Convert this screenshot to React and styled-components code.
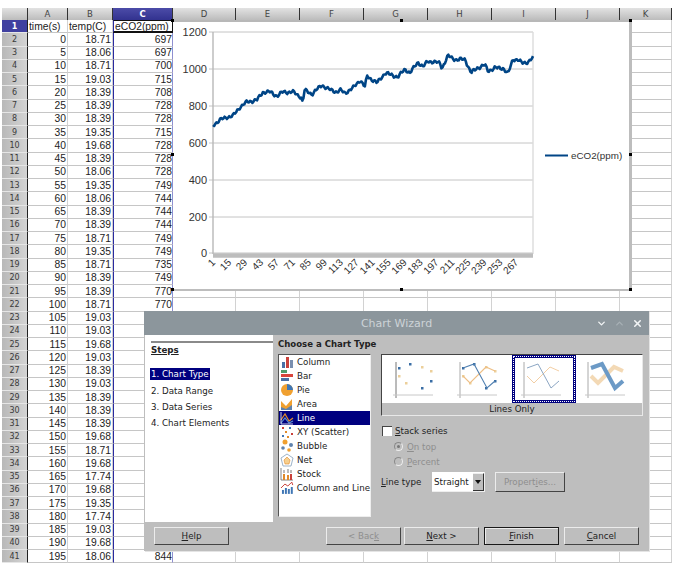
import React from "react";
import styled, { createGlobalStyle } from "styled-components";
import { ChevronDown, ChevronUp, X } from "lucide-react";

const GlobalStyle = createGlobalStyle`
  html, body {
    margin: 0;
    background: #fff;
  }
`;

const temps = [
  18.71, 18.06, 18.71, 19.03, 18.39, 18.39, 18.39, 19.35, 19.68, 18.39, 18.06, 19.35, 18.06, 18.39,
  18.39, 18.71, 19.35, 18.71, 18.39, 18.39, 18.71, 19.03, 19.03, 19.68, 19.03, 18.39, 19.03, 18.39,
  18.39, 18.39, 19.68, 18.71, 19.68, 17.74, 19.68, 19.35, 17.74, 19.03, 19.68, 18.06,
];
const eco2 = [
  697, 697, 700, 715, 708, 728, 728, 715, 728, 728, 728, 749, 744, 744, 744, 749, 749, 735, 749, 770, 770,
];
const colNames = ["A", "B", "C", "D", "E", "F", "G", "H", "I", "J", "K"];

const Page = styled.div`
  position: relative;
  width: 679px;
  height: 573px;
  overflow: hidden;
  background: #fff;
`;

const Sheet = styled.div`
  display: grid;
  grid-template-columns: 26px 40px 45px 60px 63px 64px 64px 64px 64px 64px 64px 52px;
  grid-template-rows: 12px;
  grid-auto-rows: 13.25px;
  width: 670px;
  padding: 8px 0 0 2px;
  font-family: "Liberation Sans", Arial, sans-serif;
  font-size: 10.3px;
  color: #222;
`;

const ColHead = styled.div`
  display: flex;
  align-items: center;
  justify-content: center;
  border-right: 1px solid #333;
  box-sizing: border-box;
  background: ${(p) => (p.$active ? "linear-gradient(#4c4ca8, #32328f)" : "linear-gradient(#e2e2e2, #bcbcbc)")};
  color: ${(p) => (p.$active ? "#fff" : "#444")};
  font-family: "DejaVu Sans", sans-serif;
  font-size: 8.5px;
  font-weight: ${(p) => (p.$active ? 700 : 400)};
`;

const RowHead = styled.div`
  display: flex;
  align-items: center;
  justify-content: center;
  box-sizing: border-box;
  border-right: 1px solid #222;
  border-bottom: 1px solid #e6e6e6;
  background: ${(p) => (p.$active ? "#4040a0" : "linear-gradient(90deg, #b8b8b8, #d4d4d4)")};
  color: ${(p) => (p.$active ? "#fff" : "#3a3a3a")};
  font-family: "DejaVu Sans", sans-serif;
  font-size: 8px;
  font-weight: ${(p) => (p.$active ? 700 : 400)};
`;

const Cell = styled.div`
  display: flex;
  align-items: center;
  justify-content: ${(p) => (p.$text ? "flex-start" : "flex-end")};
  box-sizing: border-box;
  padding: 0 ${(p) => (p.$sel ? 0 : 1)}px 0 ${(p) => (p.$text ? 1 : 0)}px;
  border-bottom: 1px solid #c6c6c6;
  border-right: 1px solid #d2d2d2;
  ${(p) => p.$sel && "border-left: 1px solid #2a2aa0; border-right: 1px solid #8f8fd0;"}
  white-space: nowrap;
  overflow: hidden;
`;

const CursorCell = styled(Cell)`
  border-top: 1px solid #111;
  border-bottom: 2px solid #111;
  border-right: 1px solid #111;
`;

const Handle = styled.div`
  position: absolute;
  left: ${(p) => p.$x - 2}px;
  top: ${(p) => p.$y - 2}px;
  width: 3px;
  height: 3px;
  background: #000;
`;

const ChartFrame = styled.div`
  position: absolute;
  left: 173px;
  top: 20px;
  width: 459px;
  height: 271px;
  box-sizing: border-box;
  background: #fff;
  border-top: 2px solid #b8b8b8;
  border-right: 3px solid #bdbdbd;
  border-bottom: 2px solid #bdbdbd;
`;

const ChartSvg = styled.svg`
  display: block;
  font-family: "Liberation Sans", Arial, sans-serif;
  font-size: 11px;
  fill: #333;
`;

const waypoints = [
  [213, 125], [220, 120], [227, 117], [233, 116], [240, 107], [247, 102], [257, 100], [263, 92], [270, 92],
  [277, 96], [283, 92], [293, 92], [301, 97], [303, 104], [304, 90], [312, 94], [322, 85], [328, 89], [337, 92],
  [340, 90], [345, 93], [353, 88], [360, 80], [365, 87], [367, 76], [377, 83], [385, 73], [398, 77], [405, 69],
  [410, 73], [418, 62], [423, 67], [428, 61], [440, 63], [442, 68], [448, 56], [457, 60], [465, 59], [471, 73],
  [477, 68], [485, 65], [488, 71], [495, 68], [503, 68], [508, 74], [513, 59], [518, 60], [522, 63], [528, 62],
  [533, 58],
];

const buildLine = () => {
  const pts = [];
  let seg = 0;
  for (let i = 0; i <= 276; i++) {
    const x = 213 + (i * 320) / 276;
    while (seg < waypoints.length - 2 && waypoints[seg + 1][0] < x) seg++;
    const [x0, y0] = waypoints[seg];
    const [x1, y1] = waypoints[seg + 1];
    const y = y0 + ((y1 - y0) * (x - x0)) / (x1 - x0);
    const noise = Math.sin(i * 1.7) * 1.2 + Math.sin(i * 0.61) * 0.9;
    pts.push(`${x.toFixed(1)},${(y + noise).toFixed(1)}`);
  }
  return pts.join(" ");
};

const yLabels = [
  [1200, 32], [1000, 69], [800, 106], [600, 143], [400, 180], [200, 217], [0, 253],
];

const ChartDrawing = () => (
  <ChartSvg width="456" height="267" viewBox="173 22 456 267">
    {yLabels.map(([v, y]) => (
      <g key={v}>
        <line x1="209" x2="533" y1={y} y2={y} stroke="#c4c4c4" strokeWidth="1" />
        <text x="207" y={y + 4} textAnchor="end">{v}</text>
      </g>
    ))}
    <line x1="213" x2="213" y1="32" y2="254" stroke="#b8b8b8" strokeWidth="1.4" />
    <line x1="533" x2="533" y1="32" y2="254" stroke="#dcdcdc" strokeWidth="1.4" />
    <line x1="213" x2="533" y1="255.5" y2="255.5" stroke="#bdbdbd" strokeWidth="4.5" />
    <polyline points={buildLine()} fill="none" stroke="#004586" strokeWidth="2.6" strokeLinejoin="round" />
    {Array.from({ length: 20 }, (_, i) => (
      <text
        key={i}
        x={216 + i * 15.95}
        y={263}
        textAnchor="end"
        fontSize="10"
        transform={`rotate(-45 ${216 + i * 15.95} 263)`}
      >
        {1 + i * 14}
      </text>
    ))}
    <line x1="545" x2="568" y1="155.5" y2="155.5" stroke="#004586" strokeWidth="2" />
    <text x="571" y="159" fontSize="9.8">eCO2(ppm)</text>
  </ChartSvg>
);

const Dialog = styled.div`
  position: absolute;
  left: 144px;
  top: 311px;
  width: 505px;
  height: 240px;
  display: flex;
  flex-direction: column;
  background: #bebebe;
  font-family: "DejaVu Sans", sans-serif;
  font-size: 8.7px;
  color: #222;
  box-shadow: 1px 1px 0 #e4e4e4;
`;

const TitleBar = styled.div`
  display: grid;
  grid-template-columns: 1fr auto 1fr;
  align-items: center;
  height: 24px;
  flex: none;
  background: #8c969c;
  color: #ccd3d7;
  font-size: 11px;
`;

const WindowButtons = styled.div`
  grid-column: 3;
  display: flex;
  justify-content: flex-end;
  align-items: center;
  gap: 7px;
  padding-right: 6px;
`;

const WindowButton = styled.span`
  display: flex;
  color: ${(p) => (p.$dim ? "#a7b0b5" : "#f2f4f5")};
`;

const DialogBody = styled.div`
  display: flex;
  height: 187px;
  flex: none;
`;

const StepsPanel = styled.div`
  width: 128px;
  margin-left: 1px;
  background: #fff;
  padding: 6px 0 0 6px;
  box-sizing: border-box;
`;

const StepsTitle = styled.div`
  border-top: 2px solid #8a8a8a;
  padding-top: 2px;
  height: 21px;
  font-weight: 700;
  text-decoration: underline;
`;

const StepItem = styled.div`
  height: 16.4px;
  display: flex;
  align-items: center;
  span {
    padding: 1px 1px;
    margin-left: -1px;
    background: ${(p) => (p.$active ? "#00007f" : "transparent")};
    color: ${(p) => (p.$active ? "#fff" : "#222")};
  }
`;

const TypeColumn = styled.div`
  width: 93px;
  margin-left: 5px;
  flex: none;
`;

const SectionTitle = styled.div`
  height: 19px;
  line-height: 18px;
  font-size: 8.55px;
  font-weight: 700;
  white-space: nowrap;
`;

const TypeList = styled.div`
  height: 163px;
  box-sizing: border-box;
  background: #fff;
  border-top: 1px solid #555;
  border-left: 1px solid #555;
  border-right: 1px solid #eee;
  border-bottom: 1px solid #eee;
`;

const TypeRow = styled.div`
  display: flex;
  align-items: center;
  gap: 3px;
  height: 14px;
  padding-left: 1px;
  white-space: nowrap;
  background: ${(p) => (p.$active ? "#00007f" : "transparent")};
  color: ${(p) => (p.$active ? "#fff" : "#222")};
`;

const OptionsColumn = styled.div`
  width: 262px;
  margin-left: 10px;
  padding-top: 19px;
  flex: none;
`;

const Strip = styled.div`
  border-top: 1px solid #444;
  border-left: 1px solid #444;
  border-right: 1px solid #e8e8e8;
  border-bottom: 1px solid #e8e8e8;
  background: #bebebe;
`;

const ThumbRow = styled.div`
  display: flex;
  padding-left: 2px;
  background: #fff;
`;

const Thumb = styled.div`
  width: 64px;
  height: 48px;
  box-sizing: border-box;
  ${(p) =>
    p.$selected &&
    `box-shadow: inset 0 0 0 3px #00007f;
     outline: 1px dotted #fff;
     outline-offset: -2px;`}
`;

const StripLabel = styled.div`
  height: 12px;
  line-height: 12px;
  text-align: center;
`;

const CheckRow = styled.div`
  display: flex;
  align-items: center;
  gap: 3px;
  height: 10px;
  margin: 10px 0 0 1px;
`;

const CheckBox = styled.span`
  width: 9px;
  height: 9px;
  background: #fff;
  border-top: 1px solid #444;
  border-left: 1px solid #444;
`;

const RadioRow = styled.div`
  display: flex;
  align-items: center;
  gap: 4px;
  height: 15px;
  margin-left: 13px;
  color: #8e8e8e;
`;

const RadioRows = styled.div`
  margin-top: 3px;
`;

const Radio = styled.span`
  position: relative;
  width: 7px;
  height: 7px;
  border-radius: 50%;
  border: 1px solid #8a8a8a;
  border-right-color: #eee;
  border-bottom-color: #eee;
  &::after {
    content: "";
    display: ${(p) => (p.$on ? "block" : "none")};
    position: absolute;
    inset: 2px;
    border-radius: 50%;
    background: #777;
  }
`;

const LineTypeRow = styled.div`
  display: flex;
  align-items: center;
  height: 20px;
  margin-top: 3px;
`;

const LineTypeLabel = styled.span`
  width: 51px;
`;

const Combo = styled.div`
  display: flex;
  width: 53px;
  height: 20px;
  box-sizing: border-box;
  background: #fff;
  border-right: 1px solid #eee;
  border-bottom: 1px solid #eee;
  padding-left: 2px;
  align-items: center;
  justify-content: space-between;
`;

const ComboArrow = styled.span`
  width: 11px;
  height: 18px;
  box-sizing: border-box;
  background: #bebebe;
  border-right: 1px solid #333;
  border-bottom: 1px solid #333;
  border-top: 1px solid #eee;
  display: flex;
  align-items: center;
  justify-content: center;
  &::after {
    content: "";
    border-left: 3px solid transparent;
    border-right: 3px solid transparent;
    border-top: 4px solid #111;
  }
`;

const Button = styled.div`
  display: flex;
  align-items: center;
  justify-content: center;
  box-sizing: border-box;
  width: ${(p) => p.$w || 75}px;
  height: ${(p) => p.$h || 18}px;
  margin-left: ${(p) => p.$ml || 0}px;
  border: 1px solid;
  border-color: #ececec #444 #444 #ececec;
  color: ${(p) => (p.$disabled ? "#8e8e8e" : "#222")};
  ${(p) => p.$default && "border: 1px solid #1a1a1a; box-shadow: inset 1px 1px 0 #ececec;"}
`;

const Footer = styled.div`
  display: flex;
  align-items: flex-start;
  padding: 5px 0 0 10px;
`;

const FooterSpacer = styled.div`
  flex: 1;
`;

const FooterRight = styled.div`
  display: flex;
  padding-right: 10px;
`;

const ListIcon = ({ kind, active }) => {
  const axis = active ? "#fff" : "#444";
  const art = {
    column: (
      <>
        <rect x="2" y="7" width="3" height="6" fill="#4a6fa5" />
        <rect x="6" y="2" width="3" height="11" fill="#c9403a" />
        <rect x="10" y="5" width="3" height="8" fill="#7a8fb0" />
      </>
    ),
    bar: (
      <>
        <rect x="1" y="1" width="6" height="3" fill="#4f9a6a" />
        <rect x="1" y="5" width="12" height="3" fill="#d8443c" />
        <rect x="1" y="9" width="8" height="3" fill="#4a6fa5" />
      </>
    ),
    pie: (
      <>
        <circle cx="7" cy="7" r="6" fill="#f0a030" />
        <path d="M7 7V1A6 6 0 0 1 13 7Z" fill="#3f76b5" />
      </>
    ),
    area: (
      <>
        <path d="M1 4L6 9L12 2V13H1Z" fill="#f0a030" />
        <path d="M1 10L6 12L12 8V13H1Z" fill="#5f82ad" />
      </>
    ),
    line: (
      <>
        <path d="M1 9L5 3L9 10L13 7" fill="none" stroke="#e08a2a" strokeWidth="1.2" />
        <path d="M1 12L5 7L9 12L13 10" fill="none" stroke="#5a8fd0" strokeWidth="1.2" />
        <path d="M1 1V13H13" fill="none" stroke={axis} strokeWidth="0.8" />
      </>
    ),
    xy: (
      <>
        <rect x="2" y="2" width="2" height="2" fill="#c9403a" />
        <rect x="9" y="2" width="2" height="2" fill="#3f76b5" />
        <rect x="5" y="6" width="2" height="2" fill="#e08a2a" />
        <rect x="11" y="8" width="2" height="2" fill="#c9403a" />
        <rect x="2" y="10" width="2" height="2" fill="#3f76b5" />
        <rect x="7" y="11" width="2" height="2" fill="#e08a2a" />
      </>
    ),
    bubble: (
      <>
        <circle cx="5" cy="3" r="2.5" fill="#f0a030" />
        <circle cx="11" cy="6" r="2" fill="#5f82ad" />
        <circle cx="3" cy="9" r="1.8" fill="#5f82ad" />
        <circle cx="9" cy="11" r="1.8" fill="#f0a030" />
      </>
    ),
    net: (
      <>
        <path d="M7 1L13 5L11 13H3L1 5Z" fill="none" stroke="#9db3c9" />
        <path d="M7 4L10 7L9 11H5L4 7Z" fill="#f6cf8e" stroke="#e08a2a" strokeWidth="0.6" />
      </>
    ),
    stock: (
      <>
        <path d="M1 1V13H13" fill="none" stroke="#666" strokeWidth="0.8" />
        <rect x="3" y="7" width="2" height="6" fill="#e08a2a" />
        <rect x="7" y="8" width="2" height="5" fill="#e08a2a" />
        <rect x="10" y="7" width="2" height="6" fill="#c9403a" />
        <path d="M4 3V6M8 2V6M11 3V6" stroke="#555" strokeWidth="0.8" />
      </>
    ),
    combo: (
      <>
        <rect x="2" y="9" width="2" height="4" fill="#3f76b5" />
        <rect x="5" y="7" width="2" height="6" fill="#3f76b5" />
        <rect x="8" y="8" width="2" height="5" fill="#3f76b5" />
        <rect x="11" y="6" width="2" height="7" fill="#3f76b5" />
        <path d="M1 7L5 3L8 5L12 1L13 4" fill="none" stroke="#c9403a" strokeWidth="1" />
      </>
    ),
  };
  return (
    <svg width="14" height="14" viewBox="0 0 14 14">
      {art[kind]}
    </svg>
  );
};

const chartTypes = [
  ["column", "Column"],
  ["bar", "Bar"],
  ["pie", "Pie"],
  ["area", "Area"],
  ["line", "Line"],
  ["xy", "XY (Scatter)"],
  ["bubble", "Bubble"],
  ["net", "Net"],
  ["stock", "Stock"],
  ["combo", "Column and Line"],
];

const blueLine = "18,13 29,9 42,33 50,26";
const orangeLine = "18,21 25,28 41,12 50,16";

const ThumbArt = ({ kind }) => (
  <svg width="64" height="48" viewBox="3 0 64 48">
    <line x1="15" x2="15" y1="7" y2="43" stroke={kind === "dots" ? "#777" : "#aaa"} />
    <line x1="12" x2="52" y1="40" y2="40" stroke="#c8c8c8" />
    {kind === "band" && (
      <>
        <polyline points={orangeLine} fill="none" stroke="#f3d9b5" strokeWidth="4" />
        <polyline points={blueLine} fill="none" stroke="#6c9ac6" strokeWidth="4" />
      </>
    )}
    {(kind === "dots" || kind === "both") &&
      [[18, 13], [29, 9], [41, 33], [50, 26]].map(([x, y]) => (
        <rect key={x} x={x - 1} y={y - 1} width="2.5" height="2.5" fill="#3a6ea5" />
      ))}
    {(kind === "dots" || kind === "both") &&
      [[18, 21], [25, 28], [41, 12], [50, 16]].map(([x, y]) => (
        <rect key={x} x={x - 1} y={y - 1} width="2.5" height="2.5" fill="#eccf9a" />
      ))}
    {kind === "both" && (
      <>
        <polyline points={orangeLine} fill="none" stroke="#eebf85" strokeWidth="1.1" />
        <polyline points={blueLine} fill="none" stroke="#4f7fb0" strokeWidth="1.1" />
      </>
    )}
    {kind === "lines" && (
      <>
        <polyline points={orangeLine} fill="none" stroke="#f0c89a" strokeWidth="0.9" />
        <polyline points={blueLine} fill="none" stroke="#7f9cbc" strokeWidth="0.9" />
      </>
    )}
  </svg>
);

const App = () => {
  const rows = [];
  for (let r = 2; r <= 41; r++) {
    const i = r - 2;
    const co2 = r === 41 ? 844 : eco2[i];
    rows.push(
      <React.Fragment key={r}>
        <RowHead>{r}</RowHead>
        <Cell>{i * 5}</Cell>
        <Cell>{temps[i].toFixed(2)}</Cell>
        <Cell $sel>{co2}</Cell>
        {colNames.slice(3).map((c) => (
          <Cell key={c} />
        ))}
      </React.Fragment>,
    );
  }

  return (
    <Page>
      <GlobalStyle />
      <Sheet>
        <ColHead />
        {colNames.map((c) => (
          <ColHead key={c} $active={c === "C"}>
            {c}
          </ColHead>
        ))}
        <RowHead $active>1</RowHead>
        <Cell $text>time(s)</Cell>
        <Cell $text>temp(C)</Cell>
        <CursorCell $sel $text>eCO2(ppm)</CursorCell>
        {colNames.slice(3).map((c) => (
          <Cell key={c} />
        ))}
        {rows}
      </Sheet>

      <ChartFrame>
        <ChartDrawing />
      </ChartFrame>
      <Handle $x={173} $y={21} />
      <Handle $x={402} $y={21} />
      <Handle $x={631} $y={21} />
      <Handle $x={173} $y={155} />
      <Handle $x={631} $y={155} />
      <Handle $x={631} $y={290} />
      <Handle $x={402} $y={290} />
      <Handle $x={173} $y={290} />

      <Dialog>
        <TitleBar>
          <span />
          <span>Chart Wizard</span>
          <WindowButtons>
            <WindowButton><ChevronDown size={11} strokeWidth={3} /></WindowButton>
            <WindowButton $dim><ChevronUp size={11} strokeWidth={3} /></WindowButton>
            <WindowButton><X size={11} strokeWidth={3.4} /></WindowButton>
          </WindowButtons>
        </TitleBar>
        <DialogBody>
          <StepsPanel>
            <StepsTitle>Steps</StepsTitle>
            <StepItem $active><span>1. Chart Type</span></StepItem>
            <StepItem><span>2. Data Range</span></StepItem>
            <StepItem><span>3. Data Series</span></StepItem>
            <StepItem><span>4. Chart Elements</span></StepItem>
          </StepsPanel>
          <TypeColumn>
            <SectionTitle>Choose a Chart Type</SectionTitle>
            <TypeList>
              {chartTypes.map(([kind, label]) => (
                <TypeRow key={kind} $active={kind === "line"}>
                  <ListIcon kind={kind} active={kind === "line"} />
                  {label}
                </TypeRow>
              ))}
            </TypeList>
          </TypeColumn>
          <OptionsColumn>
            <Strip>
              <ThumbRow>
                <Thumb><ThumbArt kind="dots" /></Thumb>
                <Thumb><ThumbArt kind="both" /></Thumb>
                <Thumb $selected><ThumbArt kind="lines" /></Thumb>
                <Thumb><ThumbArt kind="band" /></Thumb>
              </ThumbRow>
              <StripLabel>Lines Only</StripLabel>
            </Strip>
            <CheckRow>
              <CheckBox />
              <span><u>S</u>tack series</span>
            </CheckRow>
            <RadioRows>
              <RadioRow><Radio $on /><span><u>O</u>n top</span></RadioRow>
              <RadioRow><Radio /><span><u>P</u>ercent</span></RadioRow>
            </RadioRows>
            <LineTypeRow>
              <LineTypeLabel><u>L</u>ine type</LineTypeLabel>
              <Combo>
                Straight
                <ComboArrow />
              </Combo>
              <Button $w={70} $h={20} $ml={10} $disabled><span>Propert<u>i</u>es...</span></Button>
            </LineTypeRow>
          </OptionsColumn>
        </DialogBody>
        <Footer>
          <Button><span><u>H</u>elp</span></Button>
          <FooterSpacer />
          <FooterRight>
            <Button $disabled><span>&lt; Bac<u>k</u></span></Button>
            <Button $ml={3}><span><u>N</u>ext &gt;</span></Button>
            <Button $ml={5} $default><span><u>F</u>inish</span></Button>
            <Button $ml={5}><span><u>C</u>ancel</span></Button>
          </FooterRight>
        </Footer>
      </Dialog>
    </Page>
  );
};

export default App;
